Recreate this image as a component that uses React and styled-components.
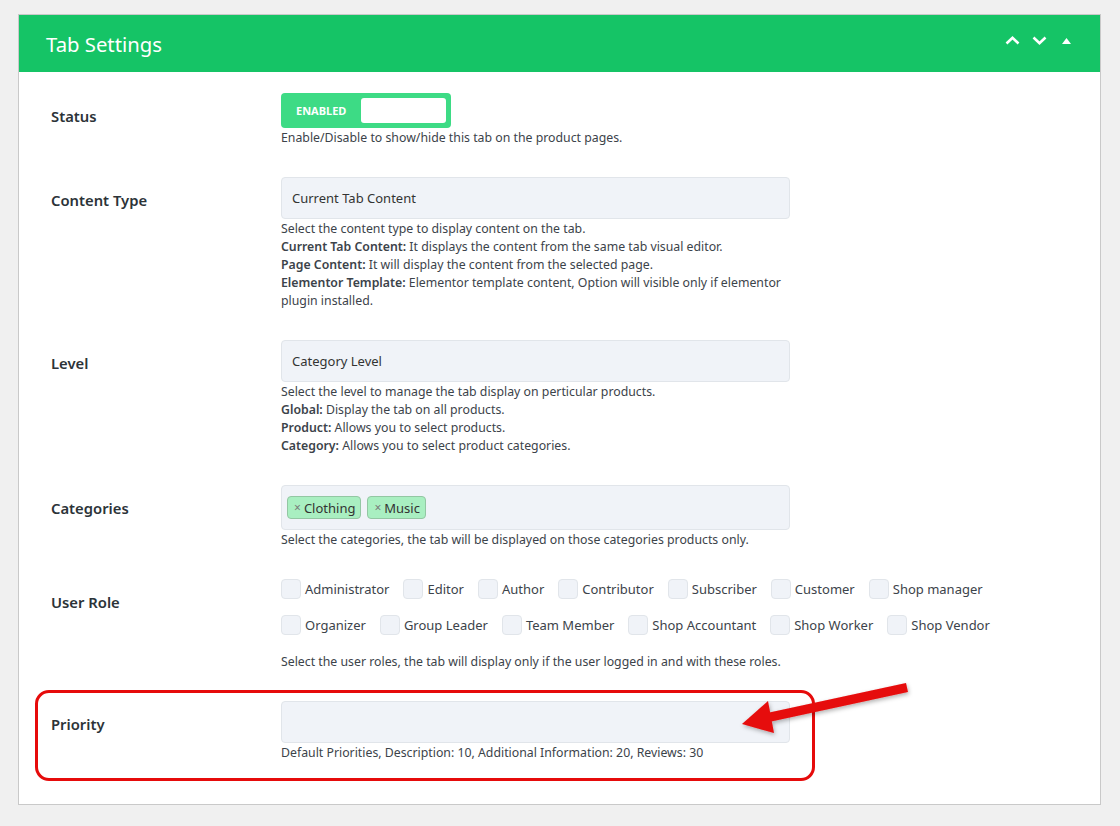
import React from 'react'
import styled, { createGlobalStyle } from 'styled-components'

const GlobalStyle = createGlobalStyle`
  html, body { margin:0; padding:0; background:#f0f0f0; }
  body { font-family:"Noto Sans", "Open Sans", sans-serif; color:#3c434a; }
  * { box-sizing:border-box; }
`

const Page = styled.div`
  padding:14px 19px 20px 18px;
`
const Panel = styled.div`
  position:relative;
  background:#fff;
  border:1px solid #c9c9c9;
`
const Header = styled.div`
  height:57px;
  background:#15c466;
  display:flex;
  align-items:center;
  justify-content:space-between;
  padding:0 29px 0 27px;
  color:#fff;
  h2{
    margin:0;
    font-size:20.3px;
    font-weight:400;
  }
`
const Tools = styled.div`
  display:flex;
  align-items:center;
  gap:12px;
  margin-top:-6px;
  svg{ display:block; }
`
const Body = styled.div`
  padding:21px 32px 42px 32px;
`
const Row = styled.div`
  display:flex;
  align-items:flex-start;
  margin-bottom:${p => p.$gap ?? 30}px;
  position:relative;
  ${p => p.$marked && `
    width:739px;
    &::before{
      content:'';
      position:absolute;
      left:-16px; top:-11px; right:-25px; bottom:-19px;
      border:3px solid #e60b0b;
      border-radius:14px;
      pointer-events:none;
    }
  `}
`
const Label = styled.div`
  width:230px;
  flex:none;
  padding-top:13px;
  font-size:14.8px;
  font-weight:600;
  color:#2c3338;
  line-height:20px;
`
const Field = styled.div`
  flex:1;
`
const Help = styled.div`
  font-size:12.3px;
  line-height:18px;
  margin-top:1px;
  color:#3c434a;
  b{ font-weight:600; }
`
const Toggle = styled.div`
  width:170px;
  height:35px;
  background:#3ddb85;
  border-radius:4px;
  display:flex;
  align-items:center;
  padding:5px;
  span{
    width:75px;
    padding-left:10px;
    color:#fff;
    font-size:11px;
    font-weight:700;
  }
  i{
    width:85px;
    height:25px;
    background:#fff;
    border-radius:3px;
  }
`
const Input = styled.div`
  width:509px;
  height:${p => p.$h ?? 42}px;
  background:#f0f3f8;
  border:1px solid #e1e5ea;
  border-radius:4px;
  display:flex;
  align-items:${p => p.$top ? 'flex-start' : 'center'};
  padding:${p => p.$top ? '10px 5px' : '0 10px'};
  gap:6px;
  font-size:13px;
  color:#333;
`
const Tag = styled.span`
  height:23px;
  display:inline-flex;
  align-items:center;
  padding:0 5px 0 6px;
  background:#a9efc1;
  border:1px solid #93c7a3;
  border-radius:4px;
  font-size:13px;
  color:#333;
  em{
    font-style:normal;
    color:#7a7a7a;
    margin-right:3px;
    font-size:12px;
  }
`
const Checks = styled.div`
  display:flex;
  gap:14px;
  margin-bottom:${p => p.$last ? 18 : 16}px;
  height:20px;
`
const Check = styled.label`
  display:flex;
  align-items:center;
  gap:4px;
  font-size:13px;
  color:#3c434a;
  span{
    width:20px;
    height:20px;
    background:#f0f3f8;
    border:1px solid #e1e5ea;
    border-radius:4px;
  }
`
const Arrow = styled.svg`
  position:absolute;
  left:688px;
  top:646px;
  pointer-events:none;
  overflow:visible;
`

const rolesA = ['Administrator', 'Editor', 'Author', 'Contributor', 'Subscriber', 'Customer', 'Shop manager']
const rolesB = ['Organizer', 'Group Leader', 'Team Member', 'Shop Accountant', 'Shop Worker', 'Shop Vendor']

export default function App() {
  return (
    <>
      <GlobalStyle />
      <Page>
        <Panel>
          <Header>
            <h2>Tab Settings</h2>
            <Tools>
              <svg width="15" height="9" viewBox="0 0 15 9"><path d="M1.5 7.5 L7.5 1.8 L13.5 7.5" fill="none" stroke="#fff" strokeWidth="2.6" /></svg>
              <svg width="15" height="9" viewBox="0 0 15 9"><path d="M1.5 1.5 L7.5 7.2 L13.5 1.5" fill="none" stroke="#fff" strokeWidth="2.6" /></svg>
              <svg width="9" height="6" viewBox="0 0 9 6" style={{ marginLeft: 3 }}><path d="M4.5 0 L9 6 L0 6 Z" fill="#fff" /></svg>
            </Tools>
          </Header>
          <Body>
            <Row>
              <Label>Status</Label>
              <Field>
                <Toggle><span>ENABLED</span><i /></Toggle>
                <Help>Enable/Disable to show/hide this tab on the product pages.</Help>
              </Field>
            </Row>
            <Row>
              <Label>Content Type</Label>
              <Field>
                <Input>Current Tab Content</Input>
                <Help>
                  Select the content type to display content on the tab.<br />
                  <b>Current Tab Content:</b> It displays the content from the same tab visual editor.<br />
                  <b>Page Content:</b> It will display the content from the selected page.<br />
                  <b>Elementor Template:</b> Elementor template content, Option will visible only if elementor<br />
                  plugin installed.
                </Help>
              </Field>
            </Row>
            <Row>
              <Label>Level</Label>
              <Field>
                <Input>Category Level</Input>
                <Help>
                  Select the level to manage the tab display on perticular products.<br />
                  <b>Global:</b> Display the tab on all products.<br />
                  <b>Product:</b> Allows you to select products.<br />
                  <b>Category:</b> Allows you to select product categories.
                </Help>
              </Field>
            </Row>
            <Row>
              <Label>Categories</Label>
              <Field>
                <Input $h={45} $top>
                  <Tag><em>×</em>Clothing</Tag>
                  <Tag><em>×</em>Music</Tag>
                </Input>
                <Help>Select the categories, the tab will be displayed on those categories products only.</Help>
              </Field>
            </Row>
            <Row>
              <Label>User Role</Label>
              <Field>
                <Checks>
                  {rolesA.map(r => <Check key={r}><span />{r}</Check>)}
                </Checks>
                <Checks $last>
                  {rolesB.map(r => <Check key={r}><span />{r}</Check>)}
                </Checks>
                <Help>Select the user roles, the tab will display only if the user logged in and with these roles.</Help>
              </Field>
            </Row>
            <Row $gap={0} $marked>
              <Label>Priority</Label>
              <Field>
                <Input />
                <Help>Default Priorities, Description: 10, Additional Information: 20, Reviews: 30</Help>
              </Field>
            </Row>
          </Body>
          <Arrow width="200" height="80" viewBox="0 0 200 80">
            <defs>
              <filter id="sh" x="-20%" y="-40%" width="140%" height="180%">
                <feDropShadow dx="1" dy="2" stdDeviation="2" floodColor="#000" floodOpacity="0.3" />
              </filter>
            </defs>
            <g filter="url(#sh)" fill="#e60b0b">
              <path d="M199 22 L201 31 L62 61 L60 52 Z" />
              <path d="M35 63 L61 40 L67 72 Z" />
            </g>
          </Arrow>
        </Panel>
      </Page>
    </>
  )
}
